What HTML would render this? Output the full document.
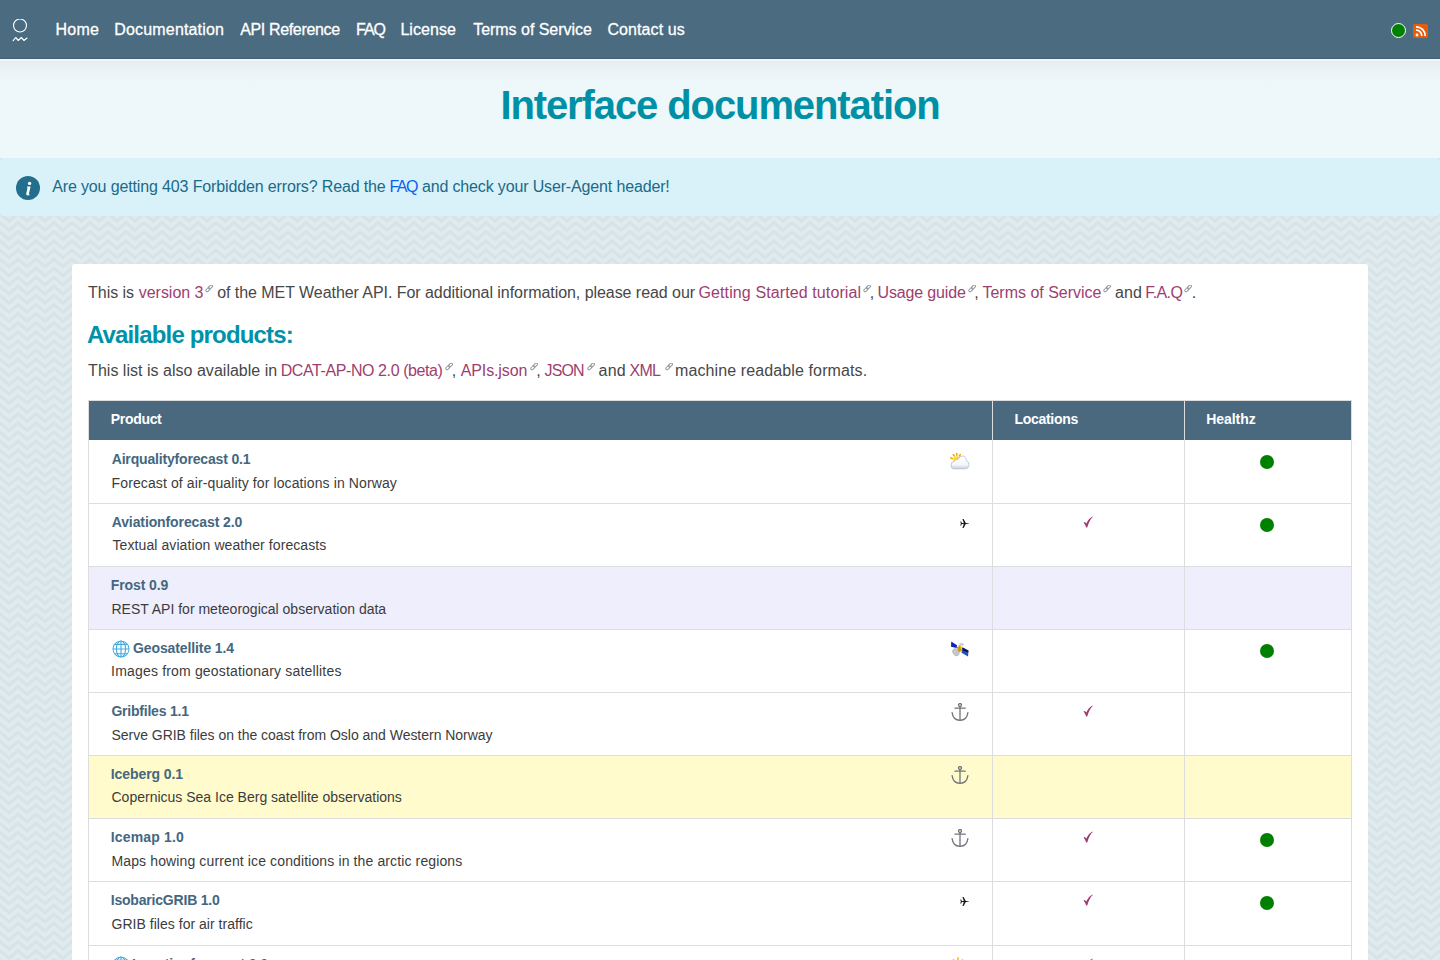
<!DOCTYPE html>
<html><head><meta charset="utf-8">
<style>
*{box-sizing:border-box}
html,body{margin:0;padding:0}
body{font-family:"Liberation Sans",sans-serif;width:1440px;height:960px;overflow:hidden;position:relative;background-color:#dfebee}
.hdr{position:absolute;left:0;top:0;width:1440px;height:59px;background:#4a6b80;z-index:3;border-bottom:1px solid #3f6076}
.logo{position:absolute;left:12px;top:19px}
.nav{position:absolute;left:0;top:0;height:58px;color:#fff;font-size:16px}
.nav span{position:absolute;top:21px;line-height:18px;white-space:nowrap;-webkit-text-stroke:0.3px #fff}
.stat{position:absolute;left:1391px;top:22.5px;width:15px;height:15px;border-radius:50%;background:#008000;border:1px solid #fff}
.rss{position:absolute;left:1413px;top:23.5px;width:14.5px;height:14.5px;border-radius:2px;background:#e55d0c;overflow:hidden}
.rss svg{position:absolute;left:0;top:0}
.titlebar{position:absolute;left:0;top:59px;width:1440px;height:99px;background:linear-gradient(#f3f9f9 0,#f3f9f9 1px,#e7eef0 2px,#eef8fa 24px)}
.titlebar h1{margin:0;position:absolute;left:0;width:1440px;text-align:center;top:0;line-height:92px;font-size:40px;font-weight:bold;color:#0090a6;letter-spacing:-1.1px}
.banner{position:absolute;left:0;top:158px;width:1440px;height:58px;background:#d9f1f9;border-radius:4px;color:#236e8c;font-size:16px}
.banner .ic{position:absolute;left:16px;top:18px;width:24px;height:24px;border-radius:50%;background:#236e8c}
.banner .tx{position:absolute;left:52px;top:0;line-height:58px;white-space:nowrap;letter-spacing:-0.18px}
.banner a{color:#1a55d6;text-decoration:none}
.card{position:absolute;left:72px;top:264px;width:1296px;height:800px;background:#fff;border-radius:3px}
.t{position:absolute;white-space:nowrap;z-index:5}
.ext,.ic{position:absolute}
.tbl{position:absolute;left:88px;top:400px;width:1264px;height:600px;border-left:1px solid #dddddd;border-right:1px solid #dddddd;border-top:1px solid #dddddd}
.th{position:absolute;left:89px;top:401px;width:1262px;height:39px;background:#4a697f}
.vl{position:absolute;top:401px;width:1px;height:600px;background:#dddddd}
.hl{position:absolute;left:88px;width:1264px;height:1px;background:#dddddd}
.bgr{position:absolute;left:89px;width:1262px}
.dot{position:absolute;left:1260.2px;width:14px;height:14px;border-radius:50%;background:#008000}
</style></head><body>
<svg style="position:absolute;left:0;top:0" width="1440" height="960"><defs><pattern id="chev" width="18" height="9.1" patternUnits="userSpaceOnUse" patternTransform="translate(0 4.3)"><g fill="none" stroke="#d7e3e6" stroke-width="3.2"><path d="M-9 7.5 L0 0 L9 7.5 L18 0 L27 7.5"/><path d="M-9 -1.6 L0 -9.1 L9 -1.6 L18 -9.1 L27 -1.6"/><path d="M-9 16.6 L0 9.1 L9 16.6 L18 9.1 L27 16.6"/></g></pattern></defs><rect width="1440" height="960" fill="url(#chev)"/></svg>
<div class="hdr">
  <svg class="logo" width="17" height="25" viewBox="0 0 17 25"><circle cx="8" cy="6.5" r="6.5" fill="none" stroke="#fff" stroke-width="1.15"/><path d="M1.2 21.7 L3.7 18.5 L6.3 21.5 L9.3 18.5 L12 21.5 L15 19" fill="none" stroke="#fff" stroke-width="1.15" stroke-linecap="round" stroke-linejoin="round"/></svg>
  
  <div class="stat"></div>
  <div class="rss"><svg width="15" height="15" viewBox="0 0 15 15"><circle cx="4" cy="11" r="1.4" fill="#fff"/><path d="M3 6.2 A5.5 5.5 0 0 1 8.8 12" fill="none" stroke="#fff" stroke-width="1.7"/><path d="M3 2.8 A9 9 0 0 1 12.2 12" fill="none" stroke="#fff" stroke-width="1.7"/></svg></div>
</div>
<div class="titlebar"><h1>Interface documentation</h1></div>
<div class="banner"><div class="ic"><svg width="24" height="24" viewBox="0 0 24 24"><circle cx="13.6" cy="7.4" r="1.7" fill="#fff"/><path d="M11.2 10.4 L14.6 10.4 L12.9 17.6 Q12.7 18.5 13.6 18.2 L13.5 19 Q12.2 19.6 10.9 19.3 Q10 19 10.3 17.6 L11.6 11.6 L10.9 11.4 Z" fill="#fff"/></svg></div></div>
<div class="card"></div>
<div class="tbl"></div>
<div class="th"></div>
<div class="bgr" style="top:566px;height:63px;background:#eeeefc"></div>
<div class="bgr" style="top:755px;height:63px;background:#fffbcc"></div>
<div class="hl" style="top:503px"></div>
<svg class="ic" style="left:950px;top:451px" width="20" height="19" viewBox="0 0 20 19"><defs><linearGradient id="cg" x1="0" y1="0" x2="0" y2="1"><stop offset="0" stop-color="#ffffff"/><stop offset="0.7" stop-color="#f4f6f9"/><stop offset="1" stop-color="#c5ced8"/></linearGradient></defs><g stroke="#f0a400" stroke-width="1.5" stroke-linecap="round"><path d="M2.55 7.46 L0.81 7.00"/><path d="M4.28 5.00 L3.24 3.52"/><path d="M6.80 4.20 L6.80 2.40"/><path d="M9.32 5.00 L10.36 3.52"/></g><circle cx="6.8" cy="8.6" r="3.4" fill="#ffd52e"/><path d="M3.5 17.8 Q1 17.8 1 14 Q1 10.5 4.5 10.3 Q5.5 8 8.2 8.2 Q9.5 5 12.4 5 Q16.5 5.2 16.3 9.5 Q19 10.5 18.9 13.5 Q18.8 17.8 15.5 17.8 Z" fill="url(#cg)" stroke="#b4c0cb" stroke-width="0.8"/></svg>
<div class="dot" style="top:454.5px"></div>
<div class="hl" style="top:566px"></div>
<svg class="ic" style="left:960px;top:519px" width="9" height="9" viewBox="0 0 9 9"><path d="M0.2 2.6 L1.2 2.6 L1.8 4 L3.8 4 L2.4 0 L3.6 0 L5.8 4 L8.8 4.3 L8.8 4.7 L5.8 5 L3.6 9 L2.4 9 L3.8 5 L1.8 5 L1.2 6.4 L0.2 6.4 L0.9 4.5 Z" fill="#1a1a1a"/></svg>
<svg class="ic" style="left:1083px;top:516.3px" width="10" height="12" viewBox="0 0 10 12"><path d="M0.6 6.4 Q1.8 5.4 3.4 7.6 Q5.4 2.4 9.6 0.4 L9.8 1 Q6.6 3.6 4.2 11.4 L3.2 11.4 Q2.2 8.4 0.6 6.4 Z" fill="#9b3b70"/></svg>
<div class="dot" style="top:517.5px"></div>
<div class="hl" style="top:629px"></div>
<div class="hl" style="top:692px"></div>
<svg class="ic" style="left:950px;top:641px" width="20" height="17" viewBox="0 0 20 17"><path d="M1.25 0.5 L7 4.25 L6.75 7 L1 5.75 Z" fill="#1620c0"/><path d="M12.5 6.25 L18.5 9.5 L18 15.5 L11.5 11.75 Z" fill="#2450b8"/><path d="M12.3 6.5 L18.4 9.7 L18.3 11.6 L12 9.2 Z" fill="#0a0f50"/><ellipse cx="5.9" cy="11.2" rx="3" ry="3.8" fill="#c4c8cc" stroke="#a9b0b6" stroke-width="0.6" transform="rotate(-30 5.9 11.2)"/><path d="M6.8 6.2 L10.8 4.6 L12.4 9.4 L9 11.2 Z" fill="#cf9a08"/><path d="M10.2 4.9 L11.2 4.5 L12.4 8.8 L11.6 9.4 Z" fill="#f2e010"/><ellipse cx="11.5" cy="3.4" rx="2.3" ry="1.7" fill="#cdd1d5"/><rect x="8.6" y="4.2" width="1.3" height="1.4" fill="#e48a8a"/></svg>
<svg class="ic" style="left:112px;top:640px" width="18" height="18" viewBox="0 0 18 18"><defs><clipPath id="gc"><circle cx="9" cy="9" r="8.6"/></clipPath></defs><g fill="none" stroke="#45ade0" stroke-width="1.15" clip-path="url(#gc)"><circle cx="9" cy="9" r="8.1"/><ellipse cx="9" cy="9" rx="4.6" ry="8.1"/><path d="M9 0 L9 18"/><path d="M0 9 L18 9"/><path d="M0 4.3 L18 4.3"/><path d="M0 13.7 L18 13.7"/></g></svg>
<div class="dot" style="top:643.5px"></div>
<div class="hl" style="top:755px"></div>
<svg class="ic" style="left:950px;top:703px" width="20" height="19" viewBox="0 0 20 19"><g fill="none" stroke="#707478" stroke-width="1.3" stroke-linecap="round"><circle cx="10" cy="2" r="1.5"/><path d="M10 3.5 L10 17.3"/><path d="M5 5.2 L15.2 5.2"/><path d="M2.1 9.6 Q3 17 10 17.3 Q17 17 17.9 9.6"/></g></svg>
<svg class="ic" style="left:1083px;top:705.3px" width="10" height="12" viewBox="0 0 10 12"><path d="M0.6 6.4 Q1.8 5.4 3.4 7.6 Q5.4 2.4 9.6 0.4 L9.8 1 Q6.6 3.6 4.2 11.4 L3.2 11.4 Q2.2 8.4 0.6 6.4 Z" fill="#9b3b70"/></svg>
<div class="hl" style="top:818px"></div>
<svg class="ic" style="left:950px;top:766px" width="20" height="19" viewBox="0 0 20 19"><g fill="none" stroke="#707478" stroke-width="1.3" stroke-linecap="round"><circle cx="10" cy="2" r="1.5"/><path d="M10 3.5 L10 17.3"/><path d="M5 5.2 L15.2 5.2"/><path d="M2.1 9.6 Q3 17 10 17.3 Q17 17 17.9 9.6"/></g></svg>
<div class="hl" style="top:881px"></div>
<svg class="ic" style="left:950px;top:829px" width="20" height="19" viewBox="0 0 20 19"><g fill="none" stroke="#707478" stroke-width="1.3" stroke-linecap="round"><circle cx="10" cy="2" r="1.5"/><path d="M10 3.5 L10 17.3"/><path d="M5 5.2 L15.2 5.2"/><path d="M2.1 9.6 Q3 17 10 17.3 Q17 17 17.9 9.6"/></g></svg>
<svg class="ic" style="left:1083px;top:831.3px" width="10" height="12" viewBox="0 0 10 12"><path d="M0.6 6.4 Q1.8 5.4 3.4 7.6 Q5.4 2.4 9.6 0.4 L9.8 1 Q6.6 3.6 4.2 11.4 L3.2 11.4 Q2.2 8.4 0.6 6.4 Z" fill="#9b3b70"/></svg>
<div class="dot" style="top:832.5px"></div>
<div class="hl" style="top:945px"></div>
<svg class="ic" style="left:960px;top:897px" width="9" height="9" viewBox="0 0 9 9"><path d="M0.2 2.6 L1.2 2.6 L1.8 4 L3.8 4 L2.4 0 L3.6 0 L5.8 4 L8.8 4.3 L8.8 4.7 L5.8 5 L3.6 9 L2.4 9 L3.8 5 L1.8 5 L1.2 6.4 L0.2 6.4 L0.9 4.5 Z" fill="#1a1a1a"/></svg>
<svg class="ic" style="left:1083px;top:894.3px" width="10" height="12" viewBox="0 0 10 12"><path d="M0.6 6.4 Q1.8 5.4 3.4 7.6 Q5.4 2.4 9.6 0.4 L9.8 1 Q6.6 3.6 4.2 11.4 L3.2 11.4 Q2.2 8.4 0.6 6.4 Z" fill="#9b3b70"/></svg>
<div class="dot" style="top:895.5px"></div>
<div class="hl" style="top:1008px"></div>
<svg class="ic" style="left:949.5px;top:957.3px" width="16" height="16" viewBox="0 0 20 20"><g stroke="#f2b600" stroke-width="1.8" stroke-linecap="round"><path d="M10 1 L10 3.6"/><path d="M4.3 3.6 L6 5.4"/><path d="M15.7 3.6 L14 5.4"/><path d="M1.5 9.5 L4 9.5"/><path d="M16 9.5 L18.5 9.5"/></g><circle cx="10" cy="10.5" r="4.6" fill="#ffc820"/></svg>
<svg class="ic" style="left:112px;top:956px" width="18" height="18" viewBox="0 0 18 18"><defs><clipPath id="gc"><circle cx="9" cy="9" r="8.6"/></clipPath></defs><g fill="none" stroke="#45ade0" stroke-width="1.15" clip-path="url(#gc)"><circle cx="9" cy="9" r="8.1"/><ellipse cx="9" cy="9" rx="4.6" ry="8.1"/><path d="M9 0 L9 18"/><path d="M0 9 L18 9"/><path d="M0 4.3 L18 4.3"/><path d="M0 13.7 L18 13.7"/></g></svg>
<svg class="ic" style="left:1083px;top:958.3px" width="10" height="12" viewBox="0 0 10 12"><path d="M0.6 6.4 Q1.8 5.4 3.4 7.6 Q5.4 2.4 9.6 0.4 L9.8 1 Q6.6 3.6 4.2 11.4 L3.2 11.4 Q2.2 8.4 0.6 6.4 Z" fill="#9b3b70"/></svg>
<div class="dot" style="top:959.5px"></div>
<div class="vl" style="left:992px"></div>
<div class="vl" style="left:1184px"></div>
<svg class="ext" style="left:205px;top:285px" width="8.3" height="8.3" viewBox="0 0 9 9"><g fill="none" stroke="#8f979f" stroke-width="1.05"><rect x="0.6" y="3.7" width="5" height="2.7" rx="1.35" transform="rotate(-45 3.1 5.05)"/><rect x="3.4" y="0.9" width="5" height="2.7" rx="1.35" transform="rotate(-45 5.9 2.25)"/></g></svg>
<svg class="ext" style="left:863.1px;top:285px" width="8.3" height="8.3" viewBox="0 0 9 9"><g fill="none" stroke="#8f979f" stroke-width="1.05"><rect x="0.6" y="3.7" width="5" height="2.7" rx="1.35" transform="rotate(-45 3.1 5.05)"/><rect x="3.4" y="0.9" width="5" height="2.7" rx="1.35" transform="rotate(-45 5.9 2.25)"/></g></svg>
<svg class="ext" style="left:967.5px;top:285px" width="8.3" height="8.3" viewBox="0 0 9 9"><g fill="none" stroke="#8f979f" stroke-width="1.05"><rect x="0.6" y="3.7" width="5" height="2.7" rx="1.35" transform="rotate(-45 3.1 5.05)"/><rect x="3.4" y="0.9" width="5" height="2.7" rx="1.35" transform="rotate(-45 5.9 2.25)"/></g></svg>
<svg class="ext" style="left:1103px;top:285px" width="8.3" height="8.3" viewBox="0 0 9 9"><g fill="none" stroke="#8f979f" stroke-width="1.05"><rect x="0.6" y="3.7" width="5" height="2.7" rx="1.35" transform="rotate(-45 3.1 5.05)"/><rect x="3.4" y="0.9" width="5" height="2.7" rx="1.35" transform="rotate(-45 5.9 2.25)"/></g></svg>
<svg class="ext" style="left:1184.4px;top:285px" width="8.3" height="8.3" viewBox="0 0 9 9"><g fill="none" stroke="#8f979f" stroke-width="1.05"><rect x="0.6" y="3.7" width="5" height="2.7" rx="1.35" transform="rotate(-45 3.1 5.05)"/><rect x="3.4" y="0.9" width="5" height="2.7" rx="1.35" transform="rotate(-45 5.9 2.25)"/></g></svg>
<svg class="ext" style="left:445px;top:363px" width="8.3" height="8.3" viewBox="0 0 9 9"><g fill="none" stroke="#8f979f" stroke-width="1.05"><rect x="0.6" y="3.7" width="5" height="2.7" rx="1.35" transform="rotate(-45 3.1 5.05)"/><rect x="3.4" y="0.9" width="5" height="2.7" rx="1.35" transform="rotate(-45 5.9 2.25)"/></g></svg>
<svg class="ext" style="left:529.7px;top:363px" width="8.3" height="8.3" viewBox="0 0 9 9"><g fill="none" stroke="#8f979f" stroke-width="1.05"><rect x="0.6" y="3.7" width="5" height="2.7" rx="1.35" transform="rotate(-45 3.1 5.05)"/><rect x="3.4" y="0.9" width="5" height="2.7" rx="1.35" transform="rotate(-45 5.9 2.25)"/></g></svg>
<svg class="ext" style="left:587px;top:363px" width="8.3" height="8.3" viewBox="0 0 9 9"><g fill="none" stroke="#8f979f" stroke-width="1.05"><rect x="0.6" y="3.7" width="5" height="2.7" rx="1.35" transform="rotate(-45 3.1 5.05)"/><rect x="3.4" y="0.9" width="5" height="2.7" rx="1.35" transform="rotate(-45 5.9 2.25)"/></g></svg>
<svg class="ext" style="left:664.5px;top:363px" width="8.3" height="8.3" viewBox="0 0 9 9"><g fill="none" stroke="#8f979f" stroke-width="1.05"><rect x="0.6" y="3.7" width="5" height="2.7" rx="1.35" transform="rotate(-45 3.1 5.05)"/><rect x="3.4" y="0.9" width="5" height="2.7" rx="1.35" transform="rotate(-45 5.9 2.25)"/></g></svg>
<div class="t" style="left:55.60px;top:21px;font-size:16px;line-height:18px;-webkit-text-stroke:0.3px #fff;color:#fff;letter-spacing:0.200px">Home</div>
<div class="t" style="left:114.30px;top:21px;font-size:16px;line-height:18px;-webkit-text-stroke:0.3px #fff;color:#fff;letter-spacing:0.167px">Documentation</div>
<div class="t" style="left:240.20px;top:21px;font-size:16px;line-height:18px;-webkit-text-stroke:0.3px #fff;color:#fff;letter-spacing:-0.350px">API Reference</div>
<div class="t" style="left:356.00px;top:21px;font-size:16px;line-height:18px;-webkit-text-stroke:0.3px #fff;color:#fff;letter-spacing:-1.000px">FAQ</div>
<div class="t" style="left:400.40px;top:21px;font-size:16px;line-height:18px;-webkit-text-stroke:0.3px #fff;color:#fff;letter-spacing:0.058px">License</div>
<div class="t" style="left:473.20px;top:21px;font-size:16px;line-height:18px;-webkit-text-stroke:0.3px #fff;color:#fff;letter-spacing:-0.030px">Terms of Service</div>
<div class="t" style="left:607.40px;top:21px;font-size:16px;line-height:18px;-webkit-text-stroke:0.3px #fff;color:#fff;letter-spacing:0.094px">Contact us</div>
<div class="t" style="left:52.20px;top:177px;font-size:16px;line-height:20px;color:#1a6a88;letter-spacing:-0.138px">Are you getting 403 Forbidden errors? Read the</div>
<div class="t" style="left:389.40px;top:177px;font-size:16px;line-height:20px;color:#0c62f0;letter-spacing:-1.450px">FAQ</div>
<div class="t" style="left:421.90px;top:177px;font-size:16px;line-height:20px;color:#1a6a88;letter-spacing:-0.147px">and check your User-Agent header!</div>
<div class="t" style="left:88.10px;top:283px;font-size:16px;line-height:20px;color:#474747;letter-spacing:-0.058px">This is</div>
<div class="t" style="left:138.75px;top:283px;font-size:16px;line-height:20px;color:#9d3e6f;letter-spacing:-0.031px">version 3</div>
<div class="t" style="left:217.25px;top:283px;font-size:16px;line-height:20px;color:#474747;letter-spacing:-0.055px">of the MET Weather API. For additional information, please read our</div>
<div class="t" style="left:698.50px;top:283px;font-size:16px;line-height:20px;color:#9d3e6f;letter-spacing:0.109px">Getting Started tutorial</div>
<div class="t" style="left:869.80px;top:283px;font-size:16px;line-height:20px;color:#474747;letter-spacing:0.000px">,</div>
<div class="t" style="left:877.50px;top:283px;font-size:16px;line-height:20px;color:#9d3e6f;letter-spacing:-0.150px">Usage guide</div>
<div class="t" style="left:974.20px;top:283px;font-size:16px;line-height:20px;color:#474747;letter-spacing:0.000px">,</div>
<div class="t" style="left:982.50px;top:283px;font-size:16px;line-height:20px;color:#9d3e6f;letter-spacing:-0.017px">Terms of Service</div>
<div class="t" style="left:1115.00px;top:283px;font-size:16px;line-height:20px;color:#474747;letter-spacing:0.125px">and</div>
<div class="t" style="left:1145.25px;top:283px;font-size:16px;line-height:20px;color:#9d3e6f;letter-spacing:-0.587px">F.A.Q</div>
<div class="t" style="left:1191.80px;top:283px;font-size:16px;line-height:20px;color:#474747;letter-spacing:0.000px">.</div>
<div class="t" style="left:86.90px;top:320px;font-size:24px;font-weight:bold;line-height:30px;color:#0092a8;letter-spacing:-0.833px">Available products:</div>
<div class="t" style="left:88.10px;top:361px;font-size:16px;line-height:20px;color:#474747;letter-spacing:0.021px">This list is also available in</div>
<div class="t" style="left:280.70px;top:361px;font-size:16px;line-height:20px;color:#9d3e6f;letter-spacing:-0.410px">DCAT-AP-NO 2.0 (beta)</div>
<div class="t" style="left:451.70px;top:361px;font-size:16px;line-height:20px;color:#474747;letter-spacing:0.000px">,</div>
<div class="t" style="left:460.80px;top:361px;font-size:16px;line-height:20px;color:#9d3e6f;letter-spacing:-0.137px">APIs.json</div>
<div class="t" style="left:536.20px;top:361px;font-size:16px;line-height:20px;color:#474747;letter-spacing:0.000px">,</div>
<div class="t" style="left:544.60px;top:361px;font-size:16px;line-height:20px;color:#9d3e6f;letter-spacing:-0.867px">JSON</div>
<div class="t" style="left:598.60px;top:361px;font-size:16px;line-height:20px;color:#474747;letter-spacing:0.150px">and</div>
<div class="t" style="left:629.40px;top:361px;font-size:16px;line-height:20px;color:#9d3e6f;letter-spacing:-0.650px">XML</div>
<div class="t" style="left:675.00px;top:361px;font-size:16px;line-height:20px;color:#474747;letter-spacing:0.113px">machine readable formats.</div>
<div class="t" style="left:110.80px;top:410px;font-size:14px;font-weight:bold;line-height:18px;color:#fff;letter-spacing:-0.317px">Product</div>
<div class="t" style="left:1014.50px;top:410px;font-size:14px;font-weight:bold;line-height:18px;color:#fff;letter-spacing:-0.300px">Locations</div>
<div class="t" style="left:1206.20px;top:410px;font-size:14px;font-weight:bold;line-height:18px;color:#fff;letter-spacing:-0.050px">Healthz</div>
<div class="t" style="left:111.70px;top:450px;font-size:14px;font-weight:bold;line-height:18px;color:#44677f;letter-spacing:-0.167px">Airqualityforecast 0.1</div>
<div class="t" style="left:111.60px;top:474px;font-size:14px;line-height:18px;color:#3c3c3c;letter-spacing:0.111px">Forecast of air-quality for locations in Norway</div>
<div class="t" style="left:111.70px;top:513px;font-size:14px;font-weight:bold;line-height:18px;color:#44677f;letter-spacing:-0.105px">Aviationforecast 2.0</div>
<div class="t" style="left:112.50px;top:536px;font-size:14px;line-height:18px;color:#3c3c3c;letter-spacing:0.088px">Textual aviation weather forecasts</div>
<div class="t" style="left:110.70px;top:576px;font-size:14px;font-weight:bold;line-height:18px;color:#44677f;letter-spacing:-0.088px">Frost 0.9</div>
<div class="t" style="left:111.50px;top:600px;font-size:14px;line-height:18px;color:#3c3c3c;letter-spacing:0.005px">REST API for meteorogical observation data</div>
<div class="t" style="left:133.00px;top:639px;font-size:14px;font-weight:bold;line-height:18px;color:#44677f;letter-spacing:-0.107px">Geosatellite 1.4</div>
<div class="t" style="left:111.10px;top:662px;font-size:14px;line-height:18px;color:#3c3c3c;letter-spacing:0.177px">Images from geostationary satellites</div>
<div class="t" style="left:111.40px;top:702px;font-size:14px;font-weight:bold;line-height:18px;color:#44677f;letter-spacing:-0.217px">Gribfiles 1.1</div>
<div class="t" style="left:111.50px;top:726px;font-size:14px;line-height:18px;color:#3c3c3c;letter-spacing:-0.026px">Serve GRIB files on the coast from Oslo and Western Norway</div>
<div class="t" style="left:110.70px;top:765px;font-size:14px;font-weight:bold;line-height:18px;color:#44677f;letter-spacing:-0.070px">Iceberg 0.1</div>
<div class="t" style="left:111.50px;top:788px;font-size:14px;line-height:18px;color:#3c3c3c;letter-spacing:0.002px">Copernicus Sea Ice Berg satellite observations</div>
<div class="t" style="left:110.70px;top:828px;font-size:14px;font-weight:bold;line-height:18px;color:#44677f;letter-spacing:0.167px">Icemap 1.0</div>
<div class="t" style="left:111.50px;top:852px;font-size:14px;line-height:18px;color:#3c3c3c;letter-spacing:0.124px">Maps howing current ice conditions in the arctic regions</div>
<div class="t" style="left:110.70px;top:891px;font-size:14px;font-weight:bold;line-height:18px;color:#44677f;letter-spacing:-0.193px">IsobaricGRIB 1.0</div>
<div class="t" style="left:111.50px;top:915px;font-size:14px;line-height:18px;color:#3c3c3c;letter-spacing:0.028px">GRIB files for air traffic</div>
<div class="t" style="left:132.00px;top:955px;font-size:14px;font-weight:bold;line-height:18px;color:#44677f;letter-spacing:0.000px">Locationforecast 2.0</div>
<div class="t" style="left:112.50px;top:979px;font-size:14px;line-height:18px;color:#3c3c3c;letter-spacing:0.000px">Weather forecast for a specified place</div>
</body></html>
